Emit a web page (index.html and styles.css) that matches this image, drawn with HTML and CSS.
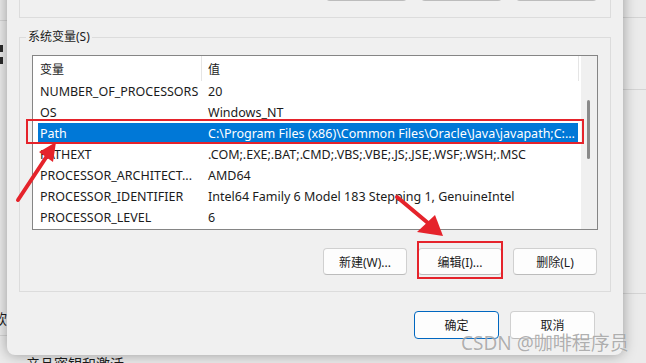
FILE: index.html
```html
<!DOCTYPE html>
<html lang="zh-CN">
<head>
    <meta charset="UTF-8">
    <title>环境变量</title>
    <link rel="stylesheet" href="styles.css">
</head>
<body>
    <!-- window behind the dialog -->
    <div class="backdrop">
        <div class="bg-line left-top"></div>
        <div class="bg-line left-bottom"></div>
        <div class="bg-line right-1"></div>
        <div class="bg-line right-2"></div>
        <div class="bg-line right-3"></div>
        <div class="bg-block block-1"></div>
        <div class="bg-block block-2"></div>
        <span class="bg-char">软</span>
        <span class="bg-caption">产品密钥和激活</span>
    </div>

    <div class="dialog">
        <div class="top-group">
            <div class="btn-row top-row">
                <button class="btn">新建(N)...</button>
                <button class="btn">编辑(E)...</button>
                <button class="btn">删除(D)</button>
            </div>
        </div>

        <fieldset class="group">
            <legend>系统变量(S)</legend>
            <div class="list">
                <div class="list-body">
                    <div class="list-head">
                        <div class="head-col name-head">变量</div>
                        <div class="head-col value-head">值</div>
                    </div>
                    <div class="row"><span class="name">NUMBER_OF_PROCESSORS</span><span class="value">20</span></div>
                    <div class="row"><span class="name">OS</span><span class="value">Windows_NT</span></div>
                    <div class="row selected"><span class="name">Path</span><span class="value">C:\Program Files (x86)\Common Files\Oracle\Java\javapath;C:\WINDOWS\system32</span></div>
                    <div class="row"><span class="name">PATHEXT</span><span class="value">.COM;.EXE;.BAT;.CMD;.VBS;.VBE;.JS;.JSE;.WSF;.WSH;.MSC</span></div>
                    <div class="row"><span class="name">PROCESSOR_ARCHITECT...</span><span class="value">AMD64</span></div>
                    <div class="row"><span class="name">PROCESSOR_IDENTIFIER</span><span class="value">Intel64 Family 6 Model 183 Stepping 1, GenuineIntel</span></div>
                    <div class="row"><span class="name">PROCESSOR_LEVEL</span><span class="value">6</span></div>
                </div>
                <div class="scrollbar"><div class="thumb"></div></div>
            </div>
            <div class="btn-row group-row">
                <button class="btn">新建(W)...</button>
                <button class="btn">编辑(I)...</button>
                <button class="btn">删除(L)</button>
            </div>
        </fieldset>

        <div class="btn-row footer">
            <button class="btn btn-default">确定</button>
            <button class="btn">取消</button>
        </div>
    </div>

    <!-- red annotations drawn over the screenshot -->
    <svg class="marks" width="646" height="363" viewBox="0 0 646 363">
        <rect x="27" y="120" width="556" height="23" fill="none" stroke="#e5232b" stroke-width="2"/>
        <rect x="418" y="242" width="84" height="36" fill="none" stroke="#e5232b" stroke-width="2"/>
        <line x1="18" y1="200" x2="47" y2="156" stroke="#e5232b" stroke-width="4" stroke-linecap="round"/>
        <polygon points="56,142 39,152 53,162" fill="#e5232b"/>
        <line x1="397" y1="197" x2="428" y2="223" stroke="#e5232b" stroke-width="4" stroke-linecap="round"/>
        <polygon points="443,236 417,232 435,215" fill="#e5232b"/>
    </svg>

    <div class="watermark">CSDN @咖啡程序员</div>
</body>
</html>
```

FILE: styles.css
```css
* {
    margin: 0;
    padding: 0;
    box-sizing: border-box;
}

body {
    width: 646px;
    height: 363px;
    overflow: hidden;
    position: relative;
    background: #ebebeb;
    font-family: "Noto Sans", "Noto Sans CJK SC", sans-serif;
    font-size: 12px;
    color: #1b1b1b;
}

/* background window */
.backdrop {
    position: absolute;
    inset: 0;
}

.bg-line {
    position: absolute;
    height: 1px;
    background: #d4d4d4;
}

.left-top { left: 0; top: 20px; width: 7px; }
.left-bottom { left: 0; top: 335px; width: 7px; }
.right-1 { left: 623px; top: 17px; width: 23px; }
.right-2 { left: 623px; top: 89px; width: 23px; }
.right-3 { left: 623px; top: 293px; width: 23px; }

.bg-block {
    position: absolute;
    left: 0;
    width: 3px;
    height: 7px;
    background: #2b2b2b;
}

.block-1 { top: 45px; }
.block-2 { top: 57px; }

.bg-char {
    position: absolute;
    left: -7px;
    top: 308px;
    font-size: 14px;
}

.bg-caption {
    position: absolute;
    left: 26px;
    top: 355px;
    font-size: 14px;
    line-height: 18px;
}

/* dialog */
.dialog {
    position: absolute;
    left: 7px;
    top: -30px;
    width: 616px;
    padding: 0 12px 16px 12px;
    background: #f0f0f0;
    border-radius: 0 0 8px 8px;
    box-shadow: 0 0 14px rgba(0,0,0,0.35);
}

.top-group {
    border: 1px solid #dcdcdc;
    padding: 3px 13px 16px 0;
}

.btn-row {
    display: flex;
    justify-content: flex-end;
}

.top-row {
    gap: 14px;
}

.top-row .btn {
    width: 81px;
}

.btn {
    height: 27px;
    width: 84px;
    flex: none;
    background: #fdfdfd;
    border: 1px solid #d0d0d0;
    border-bottom-color: #bcbcbc;
    border-radius: 4px;
    font-family: inherit;
    font-size: 12px;
    color: #1b1b1b;
}

.group {
    margin-top: 11px;
    min-width: 0;
    border: 1px solid #dcdcdc;
    padding: 10px 12px 16px 12px;
}

.group legend {
    margin-left: -6px;
    padding: 0 2px;
    line-height: 16px;
}

.list {
    display: flex;
    height: 175px;
    background: #fff;
    border: 1px solid #858585;
}

.list-body {
    flex: 1;
    min-width: 0;
    overflow: hidden;
}

.list-head {
    display: flex;
    height: 25px;
}

.head-col {
    display: flex;
    align-items: center;
    border-right: 1px solid #e5e5e5;
}

.name-head {
    width: 169px;
    padding-left: 7px;
}

.value-head {
    width: 377px;
    padding-left: 6px;
}

.row {
    display: flex;
    margin: 0 3px 0 5px;
    height: 21px;
    line-height: 21px;
    font-size: 12.5px;
    white-space: nowrap;
}

.row .name {
    width: 164px;
    flex: none;
    padding-left: 2px;
    overflow: hidden;
}

.row .value {
    flex: 1;
    min-width: 0;
    padding: 0 0 0 6px;
    overflow: hidden;
    text-overflow: ellipsis;
}

.row.selected {
    background: #0078d7;
    color: #fff;
}

.scrollbar {
    width: 16px;
    flex: none;
    background: #f0f0f0;
    padding: 44px 0 0 6px;
}

.thumb {
    width: 3px;
    height: 59px;
    border-radius: 2px;
    background: #8a8a8a;
}

.group-row {
    margin-top: 18px;
    padding-right: 1px;
    gap: 11px;
}

.footer {
    margin-top: 19px;
    padding-right: 16px;
    gap: 11px;
}

.footer .btn {
    width: 85px;
    height: 28px;
}

.btn-default {
    border-color: #0067c0;
}

.marks {
    position: absolute;
    left: 0;
    top: 0;
}

.watermark {
    position: absolute;
    left: 461px;
    top: 330px;
    font-size: 19px;
    line-height: 26px;
    color: rgba(110,110,110,0.55);
    text-shadow: 0 0 1px rgba(255,255,255,0.8);
    white-space: nowrap;
}
```
